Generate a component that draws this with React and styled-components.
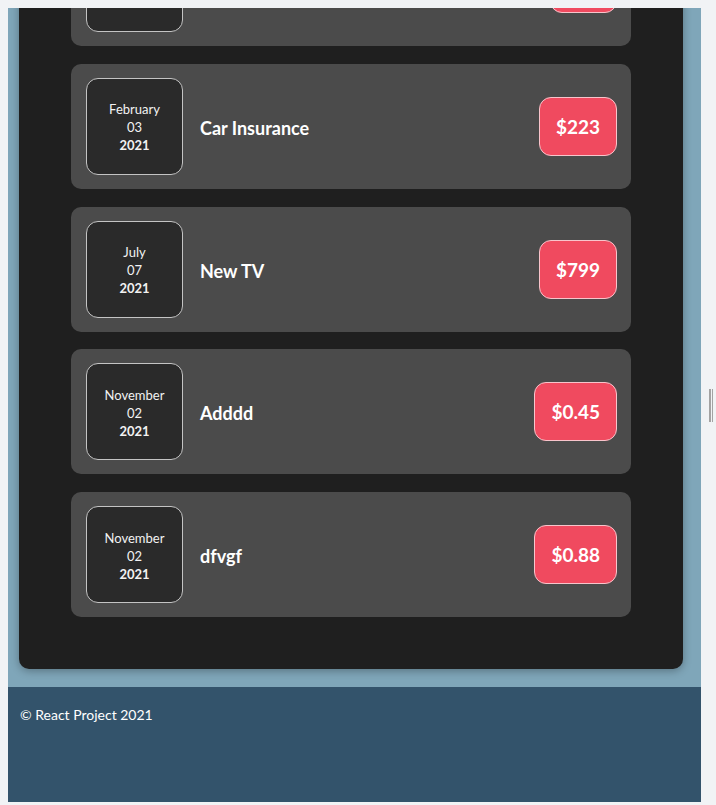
import React, { useLayoutEffect, useRef } from 'react';
import styled, { createGlobalStyle } from 'styled-components';

const GlobalStyle = createGlobalStyle`
	html, body {
		height: 100%;
	}
	body {
		margin: 8px 0 3px 8px;
		background: #f1f3f5;
		font-family: 'Segoe UI', Lato, 'Noto Sans', sans-serif;
		overflow: hidden;
	}
	* {
		box-sizing: border-box;
	}
`;

const Shell = styled.div`
	display: flex;
	height: 794px;
`;

const Viewport = styled.div`
	flex: 1;
	overflow: hidden;
	background: #7fa6b9;
`;

const Gutter = styled.div`
	width: 15px;
	display: flex;
	align-items: center;
	padding-left: 8px;
`;

const Thumb = styled.div`
	width: 4px;
	height: 33px;
	border-left: 2px solid #a3a3a3;
	border-right: 1px solid #a3a3a3;
`;

const Main = styled.main`
	padding: 18px 18px 18px 11px;
`;

const Card = styled.section`
	background: #1f1f1f;
	border-radius: 10px;
	padding: 52px 0 52px;
	display: flex;
	flex-direction: column;
	align-items: center;
	gap: 17.75px;
	box-shadow: 0 2px 8px rgba(0, 0, 0, 0.3);
`;

const Item = styled.div`
	width: 560px;
	height: 125px;
	background: #4b4b4b;
	border-radius: 10px;
	padding: 14px 14px 14px 15px;
	display: flex;
	align-items: center;
`;

const DateBox = styled.div`
	width: 97px;
	height: 97px;
	flex-shrink: 0;
	background: #2a2a2a;
	border: 1px solid #c4c4c4;
	border-radius: 12px;
	display: flex;
	flex-direction: column;
	align-items: center;
	justify-content: center;
	padding-top: 2px;
	color: #f2f2f2;
	font-size: 13px;
	line-height: 18px;
`;

const Year = styled.span`
	font-weight: bold;
`;

const Title = styled.h2`
	flex: 1;
	margin: 3px 0 0 17px;
	font-size: 18px;
	font-weight: bold;
	color: #fff;
`;

const Price = styled.div`
	background: #f04a5f;
	border: 1px solid #f8c4cb;
	border-radius: 12px;
	padding: 16px 16px;
	color: #fff;
	font-size: 19px;
	font-weight: bold;
	line-height: 25px;
`;

const Footer = styled.footer`
	height: 115px;
	background: #33536b;
	color: #fff;
	font-size: 14px;
	padding: 19px 12px;
`;

const expenses = [
	{ month: 'May', day: '12', year: '2021', title: 'Groceries', amount: '$94' },
	{ month: 'February', day: '03', year: '2021', title: 'Car Insurance', amount: '$223' },
	{ month: 'July', day: '07', year: '2021', title: 'New TV', amount: '$799' },
	{ month: 'November', day: '02', year: '2021', title: 'Adddd', amount: '$0.45' },
	{ month: 'November', day: '02', year: '2021', title: 'dfvgf', amount: '$0.88' },
];

function ExpenseItem({ expense }) {
	return (
		<Item>
			<DateBox>
				<span>{expense.month}</span>
				<span>{expense.day}</span>
				<Year>{expense.year}</Year>
			</DateBox>
			<Title>{expense.title}</Title>
			<Price>{expense.amount}</Price>
		</Item>
	);
}

function App() {
	const viewRef = useRef(null);

	// page is shown scrolled to the bottom
	useLayoutEffect(() => {
		if (viewRef.current) viewRef.current.scrollTop = viewRef.current.scrollHeight;
	}, []);

	return (
		<>
			<GlobalStyle />
			<Shell>
				<Viewport ref={viewRef}>
					<Main>
						<Card>
							{expenses.map((expense, key) => (
								<ExpenseItem key={key} expense={expense} />
							))}
						</Card>
					</Main>
					<Footer>© React Project 2021</Footer>
				</Viewport>
				<Gutter>
					<Thumb />
				</Gutter>
			</Shell>
		</>
	);
}

export default App;
